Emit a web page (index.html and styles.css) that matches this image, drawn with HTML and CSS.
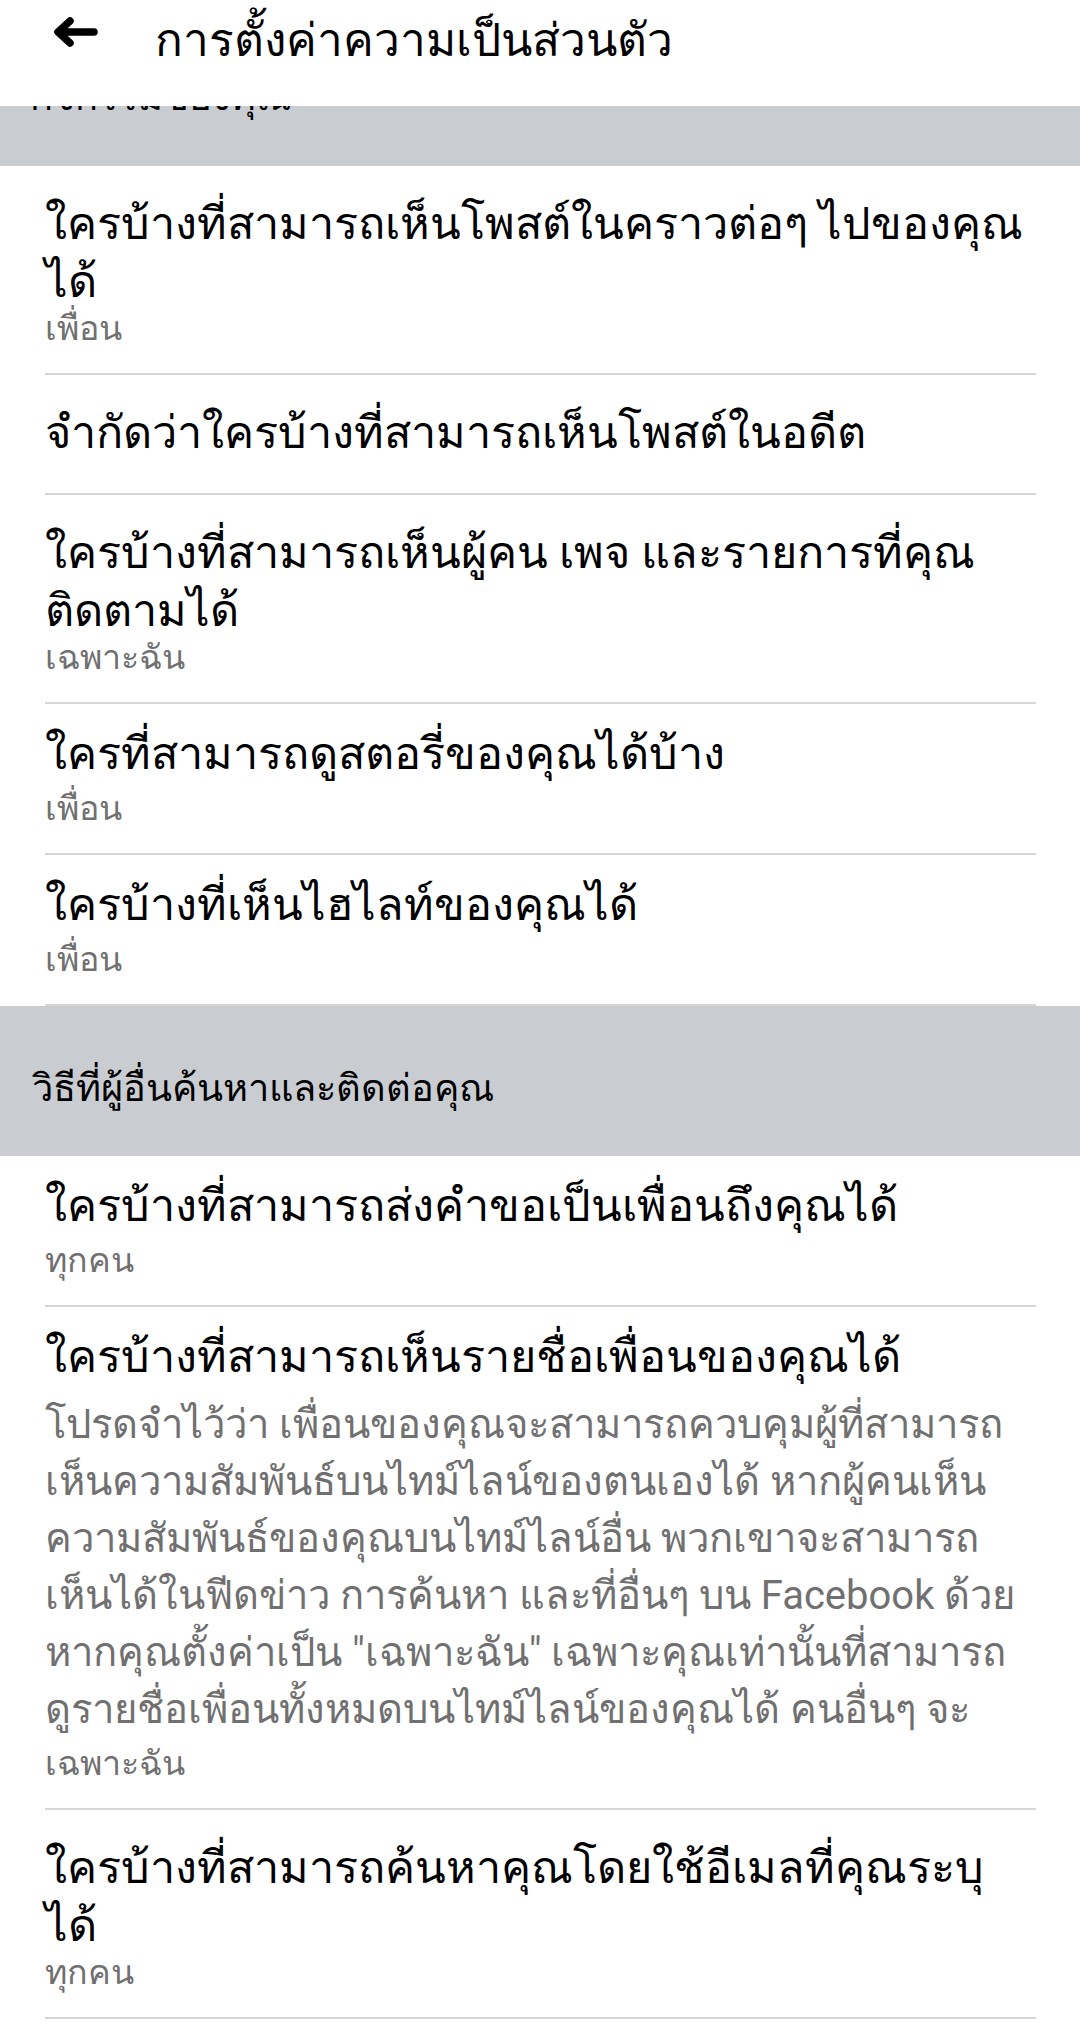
FILE: index.html
```html
<!DOCTYPE html>
<html lang="th">
<head>
  <meta charset="UTF-8">
  <meta name="viewport" content="width=device-width, initial-scale=1.0">
  <title>การตั้งค่าความเป็นส่วนตัว</title>
  <link rel="stylesheet" href="styles.css">
</head>
<body>
  <div class="top-bar">
    <a class="back-button" href="#">
      <svg width="48" height="32" viewBox="0 0 48 32">
        <path d="M42 16 H7 M18 5 L6 16 L18 27" fill="none" stroke="#000" stroke-width="7.5" stroke-linecap="round" stroke-linejoin="round"/>
      </svg>
    </a>
    <h1 class="page-title">การตั้งค่าความเป็นส่วนตัว</h1>
  </div>

  <div class="section-header cut">
    <span>กิจกรรมของคุณ</span>
  </div>

  <div class="setting tall">
    <div class="setting-title">ใครบ้างที่สามารถเห็นโพสต์ในคราวต่อๆ ไปของคุณได้</div>
    <div class="setting-value">เพื่อน</div>
  </div>
  <div class="setting single">
    <div class="setting-title">จำกัดว่าใครบ้างที่สามารถเห็นโพสต์ในอดีต</div>
  </div>
  <div class="setting tall">
    <div class="setting-title">ใครบ้างที่สามารถเห็นผู้คน เพจ และรายการที่คุณติดตามได้</div>
    <div class="setting-value">เฉพาะฉัน</div>
  </div>
  <div class="setting">
    <div class="setting-title">ใครที่สามารถดูสตอรี่ของคุณได้บ้าง</div>
    <div class="setting-value">เพื่อน</div>
  </div>
  <div class="setting">
    <div class="setting-title">ใครบ้างที่เห็นไฮไลท์ของคุณได้</div>
    <div class="setting-value">เพื่อน</div>
  </div>

  <div class="section-header">
    <span>วิธีที่ผู้อื่นค้นหาและติดต่อคุณ</span>
  </div>

  <div class="setting">
    <div class="setting-title">ใครบ้างที่สามารถส่งคำขอเป็นเพื่อนถึงคุณได้</div>
    <div class="setting-value">ทุกคน</div>
  </div>
  <div class="setting">
    <div class="setting-title">ใครบ้างที่สามารถเห็นรายชื่อเพื่อนของคุณได้</div>
    <div class="setting-desc">
      <span>โปรดจำไว้ว่า เพื่อนของคุณจะสามารถควบคุมผู้ที่สามารถ</span>
      <span>เห็นความสัมพันธ์บนไทม์ไลน์ของตนเองได้ หากผู้คนเห็น</span>
      <span>ความสัมพันธ์ของคุณบนไทม์ไลน์อื่น พวกเขาจะสามารถ</span>
      <span>เห็นได้ในฟีดข่าว การค้นหา และที่อื่นๆ บน Facebook ด้วย</span>
      <span>หากคุณตั้งค่าเป็น "เฉพาะฉัน" เฉพาะคุณเท่านั้นที่สามารถ</span>
      <span>ดูรายชื่อเพื่อนทั้งหมดบนไทม์ไลน์ของคุณได้ คนอื่นๆ จะ</span>
    </div>
    <div class="setting-value">เฉพาะฉัน</div>
  </div>
  <div class="setting tall">
    <div class="setting-title">ใครบ้างที่สามารถค้นหาคุณโดยใช้อีเมลที่คุณระบุ<br>ได้</div>
    <div class="setting-value">ทุกคน</div>
  </div>
</body>
</html>
```
FILE: styles.css
```css
body {
  margin: 0;
  font-family: Roboto, sans-serif;
  background-color: #fff;
  color: #000;
}
.top-bar {
  height: 106px;
  display: flex;
  align-items: center;
  background-color: #fff;
  padding-bottom: 28px;
  box-sizing: border-box;
}
.back-button {
  display: flex;
  margin-left: 52px;
  margin-right: 55px;
  margin-bottom: 14px;
}
.page-title {
  margin: 0;
  font-size: 46px;
  font-weight: normal;
}
.section-header {
  background-color: #c9ccd1;
  height: 150px;
  box-sizing: border-box;
  padding: 60px 32px 0;
  font-size: 38px;
  line-height: 44px;
  overflow: hidden;
}
.section-header.cut {
  height: 60px;
  padding: 0 30px;
}
.section-header.cut span {
  display: block;
  margin-top: -31px;
}
.setting {
  margin: 0 44px 0 45px;
  padding: 21px 0 25px;
  border-bottom: 2px solid #d6d6d6;
}
.setting.single {
  padding: 29px 0 31px;
}
.setting.tall {
  padding-top: 29px;
}
.setting-title {
  font-size: 45px;
  line-height: 58px;
}
.setting-value {
  margin-top: 5px;
  font-size: 34px;
  line-height: 40px;
  color: #707070;
}
.setting.tall .setting-value {
  margin-top: -3px;
}
.setting-desc {
  margin-top: 10px;
  font-size: 40px;
  line-height: 57px;
  color: #707070;
}
.setting-desc span {
  display: block;
  white-space: nowrap;
}
```
